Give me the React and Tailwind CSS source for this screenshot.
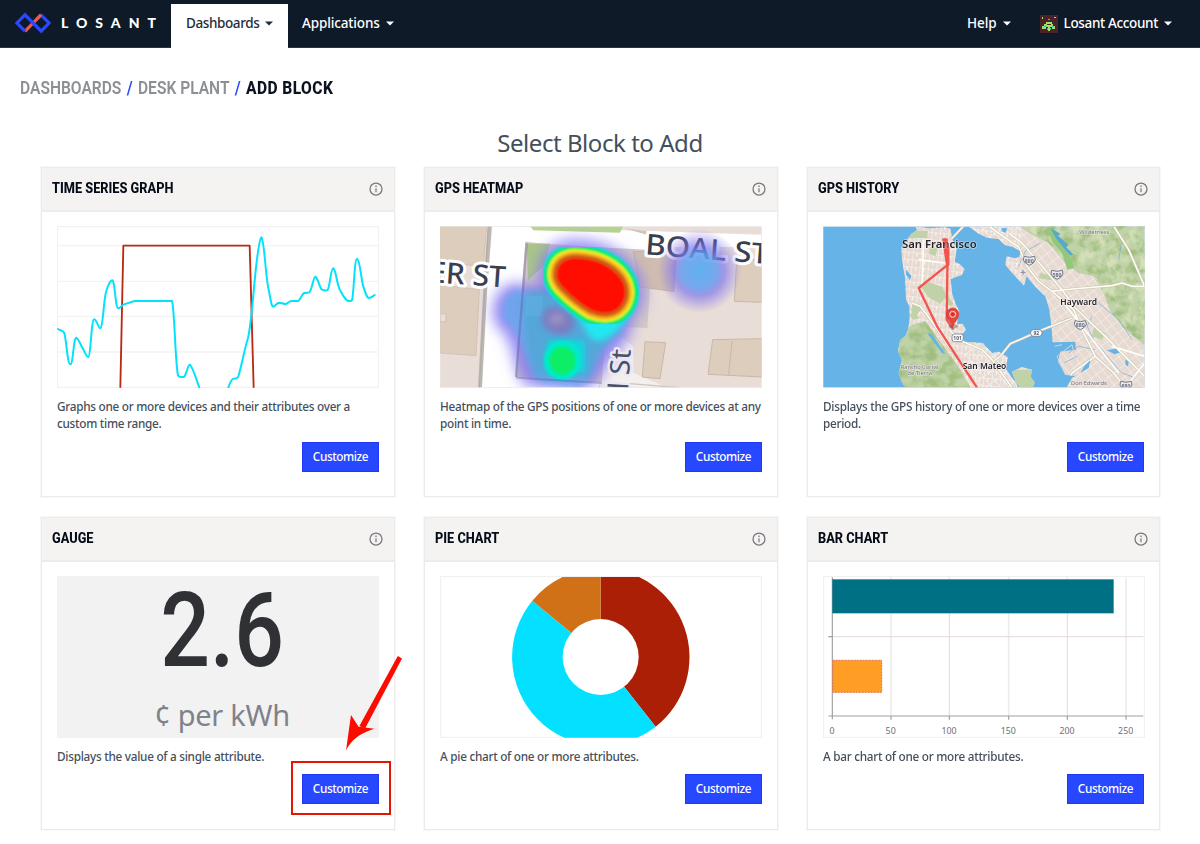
import React from "react";

const sans = "font-['Noto_Sans','Open_Sans',sans-serif]";

function Caret({ className = "" }) {
  return (
    <svg className={`h-[5px] w-2 ${className}`} viewBox="0 0 8 5" fill="currentColor">
      <path d="M0 0.5h8L4 4.6z" />
    </svg>
  );
}

function Logo() {
  return (
    <svg className="h-[22px] w-9" viewBox="0 0 36 22" fill="none" strokeWidth="3.1">
      <path d="M10 19.4 26.2 2.6" stroke="#f0564d" />
      <path d="M10 19.2 1.9 11 10 2.8l16.2 16.4L34.1 11 26 2.8" stroke="#2b48ff" />
      <path d="M21 8l5-5.2" stroke="#f0564d" />
    </svg>
  );
}

function Avatar() {
  return (
    <svg className="h-[18px] w-[18px]" viewBox="0 0 18 18" shapeRendering="crispEdges">
      <path fill="#4b2228" d="M0 0h18v18H0z" />
      <path fill="#9fe06a" d="M2 2h1v2H2zM14 2h2v1h-2zM6 7h6v2h1v2h2v3h-3v-2h-2v4H8v-4H6v2H2v-3h2V9h2z" />
      <path fill="#35c3a5" d="M8 4h2v1H8zM4 11h2v1H4zM12 11h2v1h-2zM7 13h1v2H7zM10 13h1v2h-1z" />
      <path fill="#4b2228" d="M7 9h4v1H7z" />
    </svg>
  );
}

function InfoIcon() {
  return (
    <svg className="h-[14px] w-[14px]" viewBox="0 0 14 14" fill="none" stroke="#77777b">
      <circle cx="7" cy="7" r="6" strokeWidth="1.25" />
      <path d="M7 6.2v4" strokeWidth="1.2" />
      <path d="M7 3.6v1.3" strokeWidth="1.3" />
    </svg>
  );
}

function TimeSeries() {
  return (
    <svg className="block h-[162px] w-[322px]" viewBox="51 198 966 486">
      <rect x="52.5" y="199.5" width="963" height="483" fill="#fff" stroke="#f1f1f1" strokeWidth="4" />
      <path d="M54 257H1014M54 364H1014M54 469H1014M54 576H1014" stroke="#f3f3f4" strokeWidth="4" />
      <path d="M241 683 250 257H629L641 683" fill="none" stroke="#b92a12" strokeWidth="5.5" strokeLinejoin="round" />
      <path
        d="M54 507C60 511 68 510 73 519C80 545 82 613 91 613C100 613 100 533 109 533C118 540 122 555 127 563C135 575 138 591 145 591C153 589 153 478 163 478C170 480 176 506 181 505C190 500 190 420 199 393C204 372 214 358 218 361C226 375 226 445 235 445C241 445 244 436 252 433L284 423H396C404 450 405 600 414 647C418 652 430 652 433 650C440 640 444 614 449 614C457 618 468 655 478 683M565 683C570 668 574 657 580 656C588 656 590 656 594 652C602 630 614 565 624 534C640 470 646 260 664 232C673 240 676 340 685 385C691 410 694 442 700 440C707 438 710 428 718 428C728 429 732 433 738 432C744 430 748 423 754 423H775C782 418 786 401 793 399C800 397 804 399 808 397C816 390 820 350 826 350C834 355 838 381 845 388C850 391 858 393 863 390C870 380 872 325 880 325C888 330 890 370 899 388C909 407 918 424 927 423C932 423 934 424 936 420C942 400 943 296 951 296C960 298 962 350 970 380C976 396 980 416 988 414C993 413 996 412 1004 405"
        fill="none" stroke="#04e2fb" strokeWidth="6" strokeLinecap="round" strokeLinejoin="round"
      />
    </svg>
  );
}

function HeatMap() {
  const core = "M412 345C412 312 435 297 468 297C520 299 560 314 590 344C617 372 622 409 600 438C580 463 545 462 515 450C480 430 455 408 430 382C418 369 412 358 412 345Z";
  const streetFont = "'Noto Sans', 'Open Sans', sans-serif";
  return (
    <svg className="block h-[162px] w-[322px]" viewBox="60 199 966 486">
      <defs>
        <clipPath id="heat-clip"><rect x="61" y="201" width="963" height="482" /></clipPath>
        <filter id="blur-lg" x="-50%" y="-50%" width="200%" height="200%"><feGaussianBlur stdDeviation="20" /></filter>
        <filter id="blur-md" x="-50%" y="-50%" width="200%" height="200%"><feGaussianBlur stdDeviation="9" /></filter>
        <filter id="blur-sm" x="-20%" y="-20%" width="140%" height="140%"><feGaussianBlur stdDeviation="2.5" /></filter>
        <radialGradient id="spot">
          <stop offset="0" stopColor="#52aef0" stopOpacity="0.92" />
          <stop offset="0.42" stopColor="#639ef0" stopOpacity="0.85" />
          <stop offset="0.6" stopColor="#7b72ec" stopOpacity="0.65" />
          <stop offset="1" stopColor="#8878ef" stopOpacity="0" />
        </radialGradient>
      </defs>
      <rect x="60" y="199" width="966" height="486" fill="#eee" />
      <g clipPath="url(#heat-clip)">
        <rect x="60" y="199" width="966" height="486" fill="#e9ddd8" />
        <path d="M60 199H200L190 320 60 310ZM60 375 178 390 168 588 60 580Z" fill="#dccdbd" stroke="#ccb9a8" strokeWidth="2" />
        <path d="M60 462H78V486H60Z" fill="#e9ddd8" stroke="#ccb9a8" strokeWidth="2" />
        <path d="M217 199 1026 225V262L680 262 700 300 316 245 286 652 540 668 530 690H176Z" fill="#fff" />
        <path d="M560 500 640 560V640L740 683H540Z" fill="#fff" opacity=".5" />
        <path d="M330 199H610L600 219 340 212Z" fill="#b7d391" />
        <path d="M610 205 680 225V215Z" fill="#cfc5ba" />
        <path d="M209 199 195 400 180 685" fill="none" stroke="#bdb8b2" strokeWidth="12" />
        <path d="M205 199 178 685" fill="none" stroke="#a5a6a1" strokeWidth="2" />
        <path d="M316 248 520 262 770 275 762 396 690 385 682 505 560 500 545 668 288 652Z" fill="#d3c9c3" />
        <path d="M320 252H390L372 318 324 362Z" fill="#aac48a" />
        <path d="M640 275 770 280 762 396 660 382Z" fill="#d0bdb0" stroke="#c1ada2" strokeWidth="2" />
        <path d="M950 300H1026V428L943 425ZM675 546 737 549 720 657 667 652ZM878 540 1026 537V652L864 644Z" fill="#dccdbd" stroke="#cbb7a6" strokeWidth="3" />
        <path d="M936 544 926 646" stroke="#cbb7a6" strokeWidth="3" />
        <path d="M630 672 780 684" stroke="#cdc7c2" strokeWidth="4" />
        <g fontFamily={streetFont} fill="#393f51" stroke="#fff" strokeWidth="18" strokeLinejoin="round" paintOrder="stroke" fontWeight="500">
          <text transform="translate(26 367) rotate(4)" fontSize="88" textLength="230" lengthAdjust="spacingAndGlyphs">ER ST</text>
          <text transform="translate(674 284) rotate(4.5)" fontSize="86" textLength="372" lengthAdjust="spacingAndGlyphs">BOAL ST</text>
        </g>
        <g filter="url(#blur-lg)">
          <path d={core} fill="#8578f5" stroke="#8578f5" strokeWidth="118" opacity=".8" />
          <path d="M285 370C220 375 195 470 240 510C285 545 275 640 320 680L500 690C555 660 560 600 610 560L640 500 440 390Z" fill="#8679f0" opacity=".85" />
        </g>
        <circle cx="838" cy="334" r="126" fill="url(#spot)" />
        <path d="M290 392C245 395 232 480 275 502C310 540 320 640 370 670L480 680C525 640 525 585 570 545L470 425Z" fill="#68a9ed" opacity=".85" filter="url(#blur-md)" />
        <path d="M308 430C315 510 320 600 350 655H510C530 600 545 550 610 515L540 470 440 415 370 390 330 395Z" fill="#4aa8cf" opacity=".65" filter="url(#blur-md)" />
        <path d="M319 408H368V468H315Z" fill="#60aee3" opacity=".7" />
        <ellipse cx="414" cy="483" rx="50" ry="40" transform="rotate(25 414 483)" fill="#7d7cc0" filter="url(#blur-md)" />
        <ellipse cx="410" cy="478" rx="24" ry="18" fill="#9a90c4" filter="url(#blur-md)" />
        <path d="M383 541H495V637H383Z" fill="#10d8df" filter="url(#blur-md)" />
        <ellipse cx="427" cy="602" rx="56" ry="60" fill="#00e9ca" filter="url(#blur-sm)" />
        <ellipse cx="427" cy="603" rx="39" ry="42" fill="#09ee66" filter="url(#blur-sm)" />
        <path d="M470 460C490 500 505 538 530 545C560 543 600 520 625 470Z" fill="#22e7f0" filter="url(#blur-md)" />
        <g strokeLinejoin="round" filter="url(#blur-sm)">
          <path d={core} fill="none" stroke="#17d9e8" strokeWidth="90" />
          <path d={core} fill="none" stroke="#05ef54" strokeWidth="78" />
          <path d={core} fill="none" stroke="#f3ee27" strokeWidth="57" />
          <path d={core} fill="none" stroke="#f8a91d" strokeWidth="42" />
          <path d={core} fill="#ff0800" stroke="#cb5f19" strokeWidth="25" />
          <path d={core} fill="#ff0800" stroke="#ff0800" strokeWidth="3" />
        </g>
        <path d="M320 250 288 652" stroke="#535a92" strokeWidth="7" opacity=".35" />
        <path d="M288 654 545 670" stroke="#535a92" strokeWidth="6" opacity=".35" />
        <text transform="translate(624 692) rotate(-86)" fontFamily={streetFont} fontSize="82" fill="#4b5163" stroke="#e9e6f6" strokeWidth="14" strokeLinejoin="round" paintOrder="stroke" textLength="122" lengthAdjust="spacingAndGlyphs">l St</text>
      </g>
    </svg>
  );
}

function Shield({ x, y, label }) {
  return (
    <g transform={`translate(${x} ${y})`}>
      <path d="M-16-13Q0-7 16-13L18-2Q14 9 0 14Q-14 9-18-2Z" fill="#e9e9ee" stroke="#747a89" strokeWidth="3" />
      <text y="6" fontSize="16" fontWeight="700" textAnchor="middle" fill="#6d7380">{label}</text>
    </g>
  );
}

function HistoryMap() {
  return (
    <svg className="block h-[162px] w-[322px]" viewBox="53 199 966 486" fontFamily="'Noto Sans', 'Open Sans', sans-serif">
      <defs>
        <clipPath id="map-clip"><rect x="54" y="201" width="963" height="482" /></clipPath>
        <clipPath id="land-clip">
          <path d="M330 199 335 212 318 222 288 264 290 300 300 360 302 420 312 440 313 480 308 510 300 530 285 540 278 575 290 602 280 640 290 668 305 690H650L618 652 602 628 607 592 580 576 560 580 532 550 478 546 468 526 482 510 472 492 455 494 462 455 450 430 440 400 436 358 470 346 478 328 462 312 448 306 454 270 440 235 436 208 420 203 370 206ZM488 199 520 222 545 234 580 238 598 256 622 262 645 274 642 292 628 296 604 290 600 316 625 345 656 378 664 350 690 382 720 410 732 450 738 500 742 548 810 546 812 570 765 576 758 606 782 646 820 650 835 622 855 600 850 625 800 655 780 690H1020V199ZM620 636 650 622 680 630 676 652 688 668 680 690H640Z" />
        </clipPath>
        <pattern id="streets" width="25" height="22" patternUnits="userSpaceOnUse" patternTransform="rotate(6)">
          <path d="M0 0H25M0 0V22M13 0V12" stroke="#fdf9f6" strokeWidth="3" fill="none" />
        </pattern>
        <pattern id="streets-east" width="29" height="21" patternUnits="userSpaceOnUse" patternTransform="rotate(52)">
          <path d="M0 0H29M0 0V21" stroke="#fcf8f5" strokeWidth="3" fill="none" />
        </pattern>
        <filter id="relief" x="0" y="0" width="100%" height="100%" colorInterpolationFilters="sRGB">
          <feTurbulence type="fractalNoise" baseFrequency="0.028 0.035" numOctaves="4" seed="8" />
          <feColorMatrix values="0 0 0 0 .58  0 0 0 0 .71  0 0 0 0 .44  3.5 0 0 0 -1.45" />
          <feComposite in2="SourceGraphic" operator="in" />
        </filter>
        <filter id="relief-light" x="0" y="0" width="100%" height="100%" colorInterpolationFilters="sRGB">
          <feTurbulence type="fractalNoise" baseFrequency="0.03 0.022" numOctaves="4" seed="21" />
          <feColorMatrix values="0 0 0 0 .87  0 0 0 0 .9  0 0 0 0 .76  4 0 0 0 -1.9" />
          <feComposite in2="SourceGraphic" operator="in" />
        </filter>
      </defs>
      <rect x="53" y="199" width="966" height="486" fill="#ececec" />
      <g clipPath="url(#map-clip)">
        <rect x="52" y="199" width="966" height="486" fill="#66b3e8" />
        <g clipPath="url(#land-clip)">
          <rect x="52" y="199" width="966" height="486" fill="#e7dad3" />
          <rect x="270" y="199" width="380" height="486" fill="url(#streets)" />
          <rect x="480" y="199" width="540" height="486" fill="url(#streets-east)" />
          <g fill="#c0d3a8">
            <path d="M640 199H1020V560L985 530 950 500 915 455 895 400 865 350 820 340 780 310 730 250 680 225Z" />
            <path d="M270 690V530L320 495 360 485 385 520 430 580 465 630 500 690Z" />
            <path d="M345 380 370 368 412 382 424 410 405 432 372 415ZM320 435 350 445 335 465 318 460ZM320 212 368 215 366 235 305 236ZM376 262 396 265 390 290 370 282ZM425 405 445 432 436 440 424 430ZM312 463 332 460 340 478 322 480ZM615 630H690V690H640ZM865 505 900 520 890 540 860 530ZM705 340 745 350 735 362 700 355Z" />
          </g>
          <g fill="#fff" opacity=".7">
            <path filter="url(#relief)" d="M650 199H1020V550L985 530 950 500 915 455 895 400 865 350 820 340 780 310 730 250 690 225Z" />
            <path filter="url(#relief)" d="M270 690V530L320 495 360 485 385 520 430 580 465 630 500 690Z" />
            <path filter="url(#relief-light)" d="M650 199H1020V550L985 530 950 500 915 455 895 400 865 350 820 340 780 310 730 250 690 225Z" />
          </g>
          <path d="M725 199 750 215 800 300 806 325 786 330 770 280 740 245Z" fill="#94c77c" />
          <path d="M735 205 765 222 758 228 790 256 782 262 803 284 795 288 770 258 755 240Z" fill="#55a9cf" />
          <path d="M365 520 380 525 420 582 410 580ZM302 330 318 348 314 362 302 345ZM588 205 606 206 600 220 590 215ZM905 572 935 566 950 576 928 584ZM960 600 970 605 968 620 960 615Z" fill="#66b3e8" />
          <g fill="none" stroke="#6faed0" strokeWidth="2">
            <path d="M705 250 660 275 640 320M850 530 880 560 950 640 990 655M790 580 820 560 870 570M775 610 815 590M860 470 845 500 865 540M930 205 950 240 940 300M880 430 940 480 980 540" />
          </g>
          <g fill="none" stroke="#c6c2ab" strokeWidth="8" strokeLinejoin="round">
            <path d="M550 199 600 235 640 262 665 320 700 365 740 395 805 450 830 510 870 590 925 640 960 684M740 395 800 388 920 378 950 370 980 380H1018M610 220 650 250 715 325 770 390 810 445 900 530 1018 650M320 430 345 440 390 500 430 560 480 620 510 684M430 510 470 545 530 570 560 600 620 684M870 590 800 640 778 684M925 199 970 270 1018 380" />
          </g>
          <g fill="none" stroke="#fffdf5" strokeWidth="5" strokeLinejoin="round">
            <path d="M550 199 600 235 640 262 665 320 700 365 740 395 805 450 830 510 870 590 925 640 960 684M740 395 800 388 920 378 950 370 980 380H1018M610 220 650 250 715 325 770 390 810 445 900 530 1018 650M320 430 345 440 390 500 430 560 480 620 510 684M430 510 470 545 530 570 560 600 620 684M870 590 800 640 778 684M925 199 970 270 1018 380M340 300 420 310M355 240 350 380M760 410 940 640M920 560 1018 590M960 684 1018 610" />
          </g>
        </g>
        <path d="M755 590 800 555 812 610 780 645ZM748 560 770 555" fill="none" stroke="#d7d6cf" strokeWidth="3" />
        <path d="M565 604 585 590 615 552 650 537 700 515 800 475M438 238 475 199" fill="none" stroke="#bcbcae" strokeWidth="8" />
        <path d="M565 604 585 590 615 552 650 537 700 515 800 475M438 238 475 199" fill="none" stroke="#fbf8ec" strokeWidth="5" />
        <path d="M653 331V345M646 338H661" stroke="#7c7890" strokeWidth="2.5" />
        <g fill="#746f83" stroke="#ebe9df" strokeWidth="3" paintOrder="stroke" fontSize="18">
          <text x="822" y="224" textLength="90" lengthAdjust="spacingAndGlyphs">Wilderness</text>
          <text x="286" y="627" textLength="113" lengthAdjust="spacingAndGlyphs">Rancho Corral</text>
          <text x="306" y="646" textLength="74" lengthAdjust="spacingAndGlyphs">de Tierra</text>
          <text x="797" y="676" textLength="107" lengthAdjust="spacingAndGlyphs">Don Edwards</text>
        </g>
        <Shield x={672} y={303} label="880" />
        <Shield x={755} y={345} label="580" />
        <Shield x={825} y={496} label="880" />
        <Shield x={962} y={678} label="880" />
        <g fill="#fff" stroke="#77798a" strokeWidth="2.5">
          <rect x="676" y="510" width="34" height="20" rx="9" />
          <rect x="440" y="523" width="34" height="23" rx="8" />
        </g>
        <g fontSize="15" fontWeight="700" fill="#555766" textAnchor="middle">
          <text x="693" y="526">92</text>
          <text x="457" y="540">101</text>
        </g>
        <path d="M418 240 428 265V315L340 385 395 500 470 615 515 684M428 265 426 340 424 480 442 507" fill="none" stroke="#f4544e" strokeWidth="7" strokeLinejoin="round" strokeLinecap="round" />
        <path d="M413 239H425L430 315H424Z" fill="#f4544e" stroke="#f4544e" strokeWidth="5" />
        <g fontWeight="600" fill="#24232b" stroke="#ffffff88" strokeWidth="4" strokeLinejoin="round" paintOrder="stroke">
          <text x="290" y="264" fontSize="31" textLength="224" lengthAdjust="spacingAndGlyphs">San Francisco</text>
          <text x="765" y="435" fontSize="25" textLength="110" lengthAdjust="spacingAndGlyphs">Hayward</text>
          <text x="472" y="628" fontSize="25" textLength="131" lengthAdjust="spacingAndGlyphs">San Mateo</text>
        </g>
        <path d="M418 240 428 265V300" fill="none" stroke="#f4544e" strokeWidth="9" strokeLinecap="round" opacity=".65" />
        <ellipse cx="444" cy="500" rx="14" ry="6" fill="#555" opacity=".4" />
        <path d="M442 501C438 486 424 480 424 463A18 18 0 0 1 460 463C460 480 446 486 442 501Z" fill="#e8453c" stroke="#c62f2b" strokeWidth="2" />
        <circle cx="442" cy="464" r="9" fill="none" stroke="#f9d9d4" strokeWidth="3" />
        <circle cx="442" cy="464" r="4" fill="#c92f2a" />
      </g>
    </svg>
  );
}

function Gauge() {
  return (
    <div className="flex h-[162px] w-[322px] flex-col items-center bg-[#f2f2f2] pt-px">
      <div className="h-[108px] origin-center scale-x-[0.85] pl-[9px] font-['Roboto',sans-serif] text-[103px] leading-[108px] font-medium text-[#2f3135]">2.6</div>
      <div className={`${sans} pl-2 text-[29px] leading-[60px] tracking-[-0.3px] text-[#80828b]`}>¢ per kWh</div>
    </div>
  );
}

function PieChart() {
  return (
    <svg className="block h-[162px] w-[322px]" viewBox="60 198 966 486">
      <defs><clipPath id="pie-clip"><rect x="62" y="201" width="962" height="482" /></clipPath></defs>
      <rect x="61.5" y="199.5" width="963" height="483" fill="#fff" stroke="#f1f1f1" strokeWidth="4" />
      <g clipPath="url(#pie-clip)">
        <path d="M542 441V175A266 266 0 0 1 707 650Z" fill="#ab1f06" />
        <path d="M542 441 707 650A266 266 0 0 1 337 272Z" fill="#04e0ff" />
        <path d="M542 441 337 272A266 266 0 0 1 542 175Z" fill="#d07017" />
        <circle cx="542" cy="441" r="114" fill="#fff" />
      </g>
    </svg>
  );
}

function BarChart() {
  const ticks = [["0", 82], ["50", 258], ["100", 433], ["150", 611], ["200", 787], ["250", 963]];
  return (
    <svg className="block h-[162px] w-[322px]" viewBox="54 198 966 486">
      <rect x="55.5" y="199.5" width="963" height="483" fill="#fff" stroke="#f1f1f1" strokeWidth="4" />
      <path d="M258 202V618M611 202V618M963 202V618" stroke="#ececec" strokeWidth="5" />
      <path d="M433 202V618M787 202V618M82 380H1015" stroke="#e3dad5" strokeWidth="3" />
      <path d="M82 202V628M70 380H82M70 618H1015M258 618V629M433 618V629M611 618V629M787 618V629M963 618V629" stroke="#a0a0a0" strokeWidth="3.5" />
      <rect x="82" y="208" width="844" height="102" fill="#007084" />
      <rect x="83" y="451" width="147" height="96" fill="#ff9d25" stroke="#de7048" strokeWidth="3" strokeDasharray="6 3" />
      <g fontFamily="'Noto Sans', 'Open Sans', sans-serif" fontSize="26.5" fill="#6e7076" textAnchor="middle">
        {ticks.map(([label, x]) => <text key={label} x={x - 1} y="672">{label}</text>)}
      </g>
    </svg>
  );
}

function Arrow() {
  return (
    <svg className="pointer-events-none absolute top-[137px] left-[302px] h-[98px] w-[60px]" viewBox="0 0 60 98">
      <path d="M53.8 1 58 3.4 20.8 74 15.4 71Z" fill="#fd0a00" />
      <path d="M2 95.5 7 60 14.6 71.7 30.5 73.7Q9 80 2 95.5Z" fill="#fd0a00" />
    </svg>
  );
}

function Card({ title, text, children, highlighted = false }) {
  return (
    <section className="relative flex flex-col border border-[#ebebeb] bg-white outline outline-[#f8f8f8]">
      <header className="flex h-11 items-center justify-between border-b-2 border-[#ececeb] bg-[#f4f3f2] pr-[11px] pl-2.5">
        <h2 className="-mt-0.5 origin-left scale-x-[0.85] font-['Roboto',sans-serif] text-[15px] leading-5 font-extrabold whitespace-nowrap text-[#050c18]">{title}</h2>
        <InfoIcon />
      </header>
      <div className="px-[15px] pt-[14px]">
        {children}
        <p className={`${sans} mt-[9.5px] text-[11.75px] leading-[17.5px] font-medium tracking-[-0.27px] whitespace-pre text-[#454f5c]`}>{text}</p>
        <div className="mt-[9px] flex justify-end">
          <div className="relative">
            <button className={`${sans} block h-[30px] w-[77px] border border-[#2038f5] bg-[#2848ff] text-[11.75px] font-medium tracking-[-0.4px] text-white`}>Customize</button>
            {highlighted && <div className="absolute -top-[13px] -left-[11px] h-[54px] w-[100px] border-2 border-[#e31603]" />}
          </div>
        </div>
      </div>
      {highlighted && <Arrow />}
    </section>
  );
}

export default function App() {
  return (
    <div className={`${sans} h-[844px] w-[1200px] overflow-hidden bg-white`}>
      <nav className="flex h-12 items-stretch border-b border-[#2a3442] bg-[#0f1a28] text-[13.5px] font-medium text-white">
        <div className="flex w-[171px] items-center pb-px pl-[15px]">
          <Logo />
          <span className="ml-2.5 font-['Lato',sans-serif] text-[14px] leading-5 font-black tracking-[8px]">LOSANT</span>
        </div>
        <a className="mt-1 -mb-px flex w-[117px] items-center gap-[6px] bg-white pb-[5px] pl-[15px] tracking-[-0.4px] text-[#252c38]">Dashboards<Caret /></a>
        <a className="flex items-center gap-[6px] pl-[14px] tracking-[-0.13px]">Applications<Caret /></a>
        <div className="ml-auto flex items-center pr-[28px] tracking-[-0.35px]">
          <a className="flex items-center gap-[6px]"><span className="tracking-[-0.1px]">Help</span><Caret /></a>
          <a className="ml-[29px] flex items-center"><Avatar /><span className="mr-[6px] ml-[6px]">Losant Account</span><Caret /></a>
        </div>
      </nav>
      <div className="flex h-20 items-center pl-5">
        <div className="flex origin-left scale-x-[0.82] gap-[6.5px] font-['Roboto',sans-serif] text-[19px] leading-6 font-semibold whitespace-nowrap text-[#8c8f95]">
          <span>DASHBOARDS</span><span className="text-[#2848ff]">/</span><span>DESK PLANT</span><span className="text-[#2848ff]">/</span><span className="font-extrabold tracking-[0.5px] text-[#0b1320]">ADD BLOCK</span>
        </div>
      </div>
      <h1 className="mt-[-2px] h-[41px] text-center text-[24px] leading-[34px] tracking-[-0.45px] text-[#454f5c]">Select Block to Add</h1>
      <main className="ml-[41px] grid w-[1119px] grid-cols-[354px_354px_353px] grid-rows-[330px_313px] gap-x-[29px] gap-y-5">
        <Card title="TIME SERIES GRAPH" text={"Graphs one or more devices and their attributes over a\ncustom time range."}><TimeSeries /></Card>
        <Card title="GPS HEATMAP" text={"Heatmap of the GPS positions of one or more devices at any\npoint in time."}><HeatMap /></Card>
        <Card title="GPS HISTORY" text={"Displays the GPS history of one or more devices over a time\nperiod."}><HistoryMap /></Card>
        <Card title="GAUGE" text="Displays the value of a single attribute." highlighted><Gauge /></Card>
        <Card title="PIE CHART" text="A pie chart of one or more attributes."><PieChart /></Card>
        <Card title="BAR CHART" text="A bar chart of one or more attributes."><BarChart /></Card>
      </main>
    </div>
  );
}
